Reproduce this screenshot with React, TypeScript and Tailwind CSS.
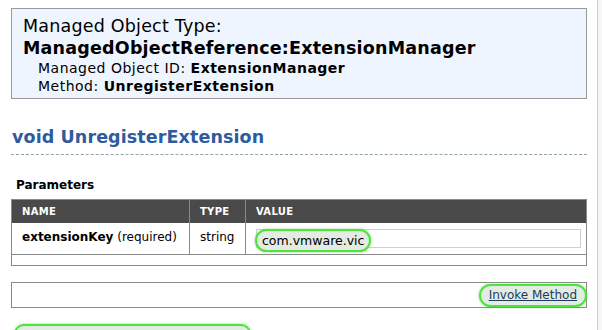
import React from 'react';

const font = { fontFamily: '"DejaVu Sans", Verdana, sans-serif' };

function Highlight({ children, className = '' }: { children: React.ReactNode; className?: string }) {
  return (
    <span
      className={`inline-block rounded-full border-2 border-[#4fe33f] bg-[#e3ebe2] shadow-[0_0_3px_rgba(80,200,70,0.6)] ${className}`}
    >
      {children}
    </span>
  );
}

export default function App() {
  return (
    <div className="flex h-[330px] w-[602px] overflow-hidden bg-white text-black" style={font}>
      <div className="w-[597px] shrink-0 pl-[11px] pr-[10px] pt-[8px]">
        {/* object header */}
        <div className="h-[91px] border border-[#9a9a9a] bg-[#eef5fe] pl-[11px] pt-[6px]">
          <div className="text-[17.5px] leading-[22px] tracking-[0.2px]">Managed Object Type:</div>
          <div className="text-[17.5px] font-bold leading-[22px] tracking-[0.2px]">ManagedObjectReference:ExtensionManager</div>
          <div className="pl-[15px] text-[14px] leading-[18px] tracking-[0.5px]">
            Managed Object ID: <b>ExtensionManager</b>
          </div>
          <div className="pl-[15px] text-[14px] leading-[18px] tracking-[0.5px]">
            Method: <b>UnregisterExtension</b>
          </div>
        </div>

        {/* method title */}
        <div className="mt-[27px] border-b border-dashed border-[#8ea5a3] pb-[6px]">
          <h1 className="pl-[1px] text-[17.5px] font-bold leading-[22px] tracking-[0.1px] text-[#2d5b9e]">void UnregisterExtension</h1>
        </div>

        <div className="mt-[22px] pl-[5px] text-[12px] font-bold leading-[16px]">Parameters</div>

        {/* parameters table */}
        <div className="mt-[6px] border border-[#8a8a8a]">
          <div className="flex h-[23px] items-center bg-[#4a4a4a] text-[10px] font-bold tracking-[0.3px] text-white">
            <div className="w-[178px] border-r border-[#8a8a8a] pl-[10px] leading-[23px]">NAME</div>
            <div className="w-[56px] border-r border-[#8a8a8a] pl-[10px] leading-[23px]">TYPE</div>
            <div className="flex-1 pl-[10px] leading-[23px]">VALUE</div>
          </div>
          <div className="flex h-[32px] border-b border-[#8a8a8a] text-[12px]">
            <div className="w-[178px] border-r border-[#8a8a8a] pl-[10px] pt-[6px] leading-[16px]">
              <b>extensionKey</b> (required)
            </div>
            <div className="w-[56px] border-r border-[#8a8a8a] pl-[10px] pt-[6px] leading-[16px]">string</div>
            <div className="relative flex-1 pl-[10px] pr-[5px] pt-[6px]">
              <div className="h-[19px] border border-[#cfcfcf] bg-white" />
              <div className="absolute left-[9px] top-[6px]">
                <Highlight className="px-[5px] text-[12.5px] leading-[19px]">com.vmware.vic</Highlight>
              </div>
            </div>
          </div>
          <div className="h-[10px]" />
        </div>

        {/* invoke box */}
        <div className="mt-[16px] flex h-[26px] items-center justify-end border border-[#8a8a8a]">
          <Highlight className="mr-[-1px] px-[8px] text-[12px] leading-[19px]">
            <a className="text-[#1d3b5c] underline">Invoke Method</a>
          </Highlight>
        </div>

        <div className="ml-[3px] mt-[16px] h-[20px] w-[237px] rounded-full border-2 border-[#4fe33f] bg-[#e3ebe2] shadow-[0_0_3px_rgba(80,200,70,0.6)]" />
      </div>
      <div className="w-[5px] shrink-0 border-l border-[#cfcfcf] bg-[#f6f6f6]" />
    </div>
  );
}
